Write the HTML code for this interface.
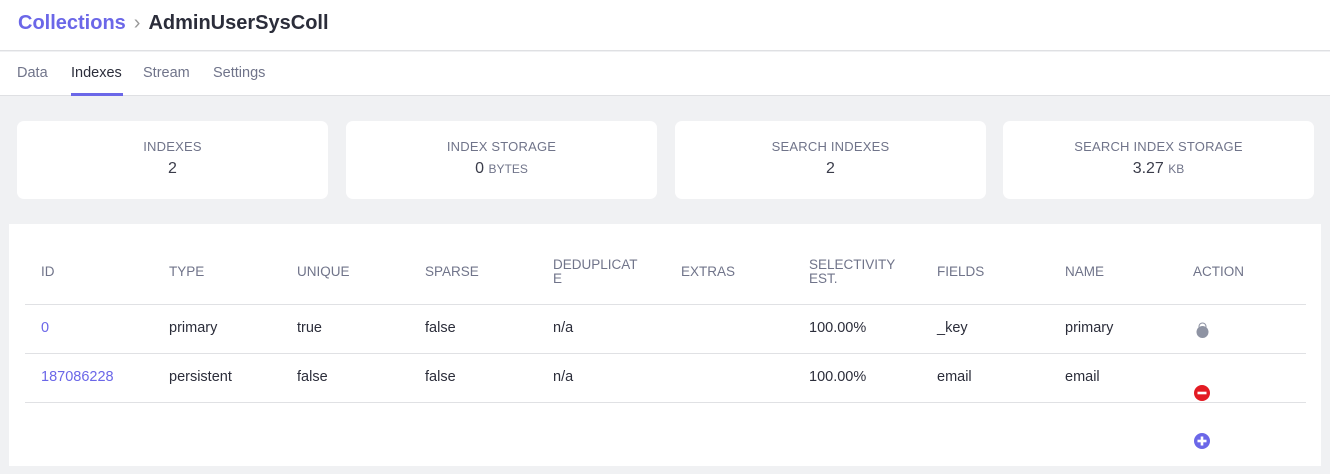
<!DOCTYPE html>
<html><head><meta charset="utf-8"><style>
*{box-sizing:border-box;margin:0;padding:0}
body{width:1330px;height:474px;background:#f0f1f3;font-family:"Liberation Sans",sans-serif;position:relative;overflow:hidden}
.hdr{position:absolute;left:0;top:0;width:1330px;height:51px;background:#fff;border-bottom:1px solid #dfe0e3}
.hdr .t{position:absolute;left:18px;top:12px;font-size:20px;font-weight:bold;color:#2b2d3a;white-space:nowrap}
.hdr .t .coll{color:#6b67e8}
.hdr .t .s{color:#999;font-weight:normal;margin:0 8px}
.tabs{position:absolute;left:0;top:52px;width:1330px;height:44px;background:#fff;border-bottom:1px solid #dfe0e3}
.tab{position:absolute;top:13px;font-size:14.5px;color:#70748a}
.tab.a{color:#2b2d3a}
.ul{position:absolute;left:71px;top:41px;width:52px;height:3px;background:#6b67e8}
.card{position:absolute;top:121px;width:311px;height:78px;background:#fff;border-radius:7px;text-align:center;color:#70748a}
.card .l{margin-top:18px;font-size:13px;letter-spacing:.2px}
.card .v{margin-top:6px;font-size:16px;color:#3a3c4a}
.card .v small{font-size:12px;color:#70748a}
.panel{position:absolute;left:9px;top:224px;width:1312px;height:242px;background:#fff}
.line{position:absolute;left:25px;width:1281px;height:1px;background:#e0e1e4}
.c{position:absolute;font-size:14.5px;color:#2b2d3a}
.h{position:absolute;font-size:13.5px;color:#70748a;line-height:14px}
.id{color:#6b67e8}
</style></head><body>
<div class="hdr"><div class="t"><span class="coll">Collections</span><span class="s">›</span>AdminUserSysColl</div></div>
<div class="tabs">
<div class="tab" style="left:17px">Data</div>
<div class="tab a" style="left:71px">Indexes</div>
<div class="tab" style="left:143px">Stream</div>
<div class="tab" style="left:213px">Settings</div>
<div class="ul"></div>
</div>
<div class="card" style="left:17px"><div class="l">INDEXES</div><div class="v">2</div></div>
<div class="card" style="left:346px"><div class="l">INDEX STORAGE</div><div class="v">0 <small>BYTES</small></div></div>
<div class="card" style="left:675px"><div class="l">SEARCH INDEXES</div><div class="v">2</div></div>
<div class="card" style="left:1003px"><div class="l">SEARCH INDEX STORAGE</div><div class="v">3.27 <small>KB</small></div></div>
<div class="panel"></div>
<div class="h" style="left:41px;top:265px">ID</div>
<div class="h" style="left:169px;top:265px">TYPE</div>
<div class="h" style="left:297px;top:265px">UNIQUE</div>
<div class="h" style="left:425px;top:265px">SPARSE</div>
<div class="h" style="left:553px;top:258px">DEDUPLICAT<br>E</div>
<div class="h" style="left:681px;top:265px">EXTRAS</div>
<div class="h" style="left:809px;top:258px">SELECTIVITY<br>EST.</div>
<div class="h" style="left:937px;top:265px">FIELDS</div>
<div class="h" style="left:1065px;top:265px">NAME</div>
<div class="h" style="left:1193px;top:265px">ACTION</div>
<div class="line" style="top:304px"></div>
<div class="line" style="top:353px"></div>
<div class="line" style="top:402px"></div>
<div class="c id" style="left:41px;top:320px">0</div>
<div class="c" style="left:169px;top:320px">primary</div>
<div class="c" style="left:297px;top:320px">true</div>
<div class="c" style="left:425px;top:320px">false</div>
<div class="c" style="left:553px;top:320px">n/a</div>
<div class="c" style="left:809px;top:320px">100.00%</div>
<div class="c" style="left:937px;top:320px">_key</div>
<div class="c" style="left:1065px;top:320px">primary</div>
<div class="c id" style="left:41px;top:369px">187086228</div>
<div class="c" style="left:169px;top:369px">persistent</div>
<div class="c" style="left:297px;top:369px">false</div>
<div class="c" style="left:425px;top:369px">false</div>
<div class="c" style="left:553px;top:369px">n/a</div>
<div class="c" style="left:809px;top:369px">100.00%</div>
<div class="c" style="left:937px;top:369px">email</div>
<div class="c" style="left:1065px;top:369px">email</div>
<svg style="position:absolute;left:1195px;top:321px" width="15" height="18" viewBox="0 0 15 18"><path d="M4 8V5.5a3.5 3.5 0 0 1 7 0V8" fill="none" stroke="#8e93a3" stroke-width="1"/><circle cx="7.5" cy="11" r="6" fill="#8e93a3"/></svg>
<svg style="position:absolute;left:1194px;top:385px" width="16" height="16" viewBox="0 0 16 16"><circle cx="8" cy="8" r="8" fill="#e31b23"/><rect x="3.5" y="6.7" width="9" height="2.6" fill="#fff"/></svg>
<svg style="position:absolute;left:1194px;top:433px" width="16" height="16" viewBox="0 0 16 16"><circle cx="8" cy="8" r="8" fill="#6b67e8"/><rect x="3.5" y="6.7" width="9" height="2.6" fill="#fff"/><rect x="6.7" y="3.5" width="2.6" height="9" fill="#fff"/></svg>
</body></html>
